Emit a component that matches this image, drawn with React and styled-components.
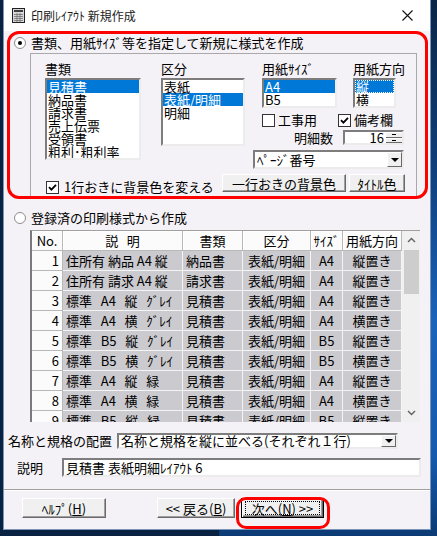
import styled, { createGlobalStyle } from 'styled-components';

const FONT = `"Noto Sans CJK JP", "Noto Sans", sans-serif`;

const GlobalStyle = createGlobalStyle`
  * { box-sizing: border-box; }
  html, body { margin: 0; padding: 0; background: #0b2646; }
  body { font-family: ${FONT}; font-size: 13px; color: #000; }
  #root { width: 437px; height: 536px; overflow: hidden; }
`;

const rows = [
  ['1', '住所有 納品 A4 縦', '納品書', '表紙/明細', 'A4', '縦置き'],
  ['2', '住所有 請求 A4 縦', '請求書', '表紙/明細', 'A4', '縦置き'],
  ['3', '標準   A4   縦   ｸﾞﾚｲ', '見積書', '表紙/明細', 'A4', '縦置き'],
  ['4', '標準   A4   横   ｸﾞﾚｲ', '見積書', '表紙/明細', 'A4', '横置き'],
  ['5', '標準   B5   縦   ｸﾞﾚｲ', '見積書', '表紙/明細', 'B5', '縦置き'],
  ['6', '標準   B5   横   ｸﾞﾚｲ', '見積書', '表紙/明細', 'B5', '横置き'],
  ['7', '標準   A4   縦   緑', '見積書', '表紙/明細', 'A4', '縦置き'],
  ['8', '標準   A4   横   緑', '見積書', '表紙/明細', 'A4', '横置き'],
  ['9', '標準   B5   縦   緑', '見積書', '表紙/明細', 'B5', '縦置き'],
];

const headers = ['No.', '説   明', '書類', '区分', 'ｻｲｽﾞ', '用紙方向'];
const cellAlign = ['right', 'left', 'left', 'center', 'center', 'center'];

const Desktop = styled.div`
  width: 437px;
  height: 536px;
  padding-left: 3px;
  background:
    linear-gradient(90deg, #0a2241 0 50%, transparent 50%),
    linear-gradient(180deg, #0b2646 0%, #0f3d78 30%, #1a63bb 60%, #155aae 85%, #0c3a74 100%);
`;

const Window = styled.div`
  width: 428px;
  height: 530px;
  border: 1px solid #7a95b8;
  border-top: none;
  background: #f4f2f6;
  display: flex;
  flex-direction: column;
`;

const TitleBar = styled.div`
  height: 31px;
  flex: none;
  background: #fff;
  display: flex;
  align-items: center;
  padding-left: 8px;
`;

const TitleText = styled.span`
  margin-left: 6px;
  font-size: 12px;
  line-height: 16px;
  color: #1a1a1a;
`;

const CloseButton = styled.div`
  margin-left: auto;
  width: 46px;
  height: 31px;
  display: flex;
  align-items: center;
  justify-content: center;
`;

const Client = styled.div`
  flex: 1;
  position: relative;
  display: flex;
  flex-direction: column;
`;

const RadioRow = styled.div`
  display: flex;
  align-items: center;
  gap: 5px;
  height: 16px;
  margin-top: ${p => p.$top}px;
  padding-left: 10px;
  line-height: 16px;
`;

const Radio = styled.span`
  width: 12px;
  height: 12px;
  border-radius: 50%;
  border: 1px solid #8e8e8e;
  background: #fff;
  display: flex;
  align-items: center;
  justify-content: center;
  &::after {
    content: '';
    width: 4px;
    height: 4px;
    border-radius: 50%;
    background: ${p => (p.$checked ? '#000' : 'transparent')};
  }
`;

const GroupBox = styled.div`
  margin: 2px 0 0 26px;
  width: 387px;
  height: 144px;
  border: 1px solid #a9a9a9;
  padding: 6px 11px 0 14px;
  display: flex;
  flex-direction: column;
`;

const TopArea = styled.div`
  display: flex;
  align-items: flex-start;
`;

const Column = styled.div`
  width: ${p => p.$w}px;
  margin-left: ${p => p.$ml || 0}px;
  display: flex;
  flex-direction: column;
`;

const FieldLabel = styled.div`
  line-height: 18px;
  height: 18px;
  white-space: nowrap;
`;

const ListBox = styled.div`
  height: ${p => p.$h}px;
  background: #fff;
  border: 2px solid;
  border-color: #7d7d7d #ececec #ececec #7d7d7d;
  overflow: hidden;
`;

const ListItem = styled.div`
  height: 13px;
  line-height: 13px;
  padding-left: 1px;
  white-space: nowrap;
  background: ${p => (p.$selected ? '#0078d7' : 'transparent')};
  color: ${p => (p.$selected ? '#fff' : '#000')};
  outline: ${p => (p.$focus ? '1px dotted #fff' : 'none')};
  outline-offset: -1px;
`;

const RightArea = styled.div`
  margin-left: 8px;
  width: 152px;
  display: flex;
  flex-direction: column;
`;

const SmallListsRow = styled.div`
  display: flex;
  gap: 16px;
  padding-left: 9px;
`;

const CheckRow = styled.div`
  display: flex;
  align-items: center;
  height: 14px;
  margin-top: 5px;
  padding-left: 9px;
  gap: 21px;
`;

const CheckItem = styled.label`
  display: flex;
  align-items: center;
  gap: ${p => p.$gap || 3}px;
  line-height: 14px;
  white-space: nowrap;
  margin-top: ${p => p.$top || 0}px;
  margin-left: ${p => p.$left || 0}px;
`;

const CheckBox = styled.span`
  width: 13px;
  height: 13px;
  border: 1px solid #333;
  background: #fff;
  display: flex;
  align-items: center;
  justify-content: center;
  flex: none;
`;

const SpinRow = styled.div`
  display: flex;
  align-items: center;
  justify-content: flex-end;
  gap: 10px;
  height: 15px;
  margin-top: 3px;
  padding-right: 1px;
  line-height: 15px;
`;

const Field = styled.div`
  background: #fff;
  border: 2px solid;
  border-color: #7d7d7d #ececec #ececec #7d7d7d;
  display: flex;
  align-items: center;
  width: ${p => p.$w}px;
  height: ${p => p.$h}px;
  margin-top: ${p => p.$top || 0}px;
  padding-left: ${p => (p.$pl === undefined ? 2 : p.$pl)}px;
  white-space: nowrap;
  line-height: ${p => Math.min(14, p.$h - 4)}px;
`;

const SpinValue = styled.span`
  flex: 1;
  text-align: right;
  padding-right: 2px;
`;

const SpinButtons = styled.div`
  width: 16px;
  height: 100%;
  display: flex;
  flex-direction: column;
`;

const SpinHalf = styled.div`
  flex: 1;
  background: #f0f0f0;
  border-top: 1px solid #fff;
  border-bottom: 1px solid #696969;
  display: flex;
  align-items: center;
  justify-content: center;
  &::after {
    content: '';
    width: 4px;
    height: 1px;
    background: #000;
  }
`;

const ComboArrow = styled.div`
  margin-left: auto;
  width: 15px;
  height: 100%;
  flex: none;
  background: #f0f0f0;
  border: 1px solid;
  border-color: #fff #696969 #696969 #fff;
  display: flex;
  align-items: center;
  justify-content: center;
  &::after {
    content: '';
    border-left: 4px solid transparent;
    border-right: 4px solid transparent;
    border-top: 4px solid #000;
  }
`;

const ComboText = styled.span`
  flex: 1;
`;

const BottomRow = styled.div`
  display: flex;
  align-items: flex-start;
  margin-top: 5px;
  height: 18px;
`;

const ButtonGroup = styled.div`
  margin-left: auto;
  display: flex;
  gap: 3px;
`;

const PushButton = styled.button`
  font-family: ${FONT};
  font-size: 13px;
  color: #000;
  width: ${p => p.$w}px;
  height: ${p => p.$h}px;
  margin-left: ${p => p.$ml || 0}px;
  padding: 0;
  background: #f0f0f0;
  border: 1px solid;
  border-color: ${p => (p.$default ? '#000' : '#fff #696969 #696969 #fff')};
  box-shadow: ${p =>
    p.$default
      ? 'inset 1px 1px 0 #fff, inset -1px -1px 0 #696969, inset -2px -2px 0 #a0a0a0'
      : 'inset -1px -1px 0 #a0a0a0'};
  display: flex;
  align-items: center;
  justify-content: center;
  line-height: 15px;
  white-space: nowrap;
`;

const FocusText = styled.span`
  width: calc(100% - 8px);
  height: calc(100% - 6px);
  outline: 1px dotted #000;
  display: flex;
  align-items: center;
  justify-content: center;
`;

const GridFrame = styled.div`
  margin: 4px 0 0 26px;
  width: 390px;
  height: 192px;
  display: flex;
  border-left: 2px solid #7a7a7a;
  border-top: 1px solid #a0a0a0;
  background: #fff;
`;

const Grid = styled.div`
  width: 370px;
  height: 100%;
  overflow: hidden;
  display: grid;
  grid-template-columns: 31px 120px 60px 68px 32px 59px;
  grid-auto-rows: 20px;
  align-content: start;
`;

const HeaderCell = styled.div`
  background: #fbfbfb;
  border-right: 1px solid #b8b8b8;
  border-bottom: 1px solid #b8b8b8;
  box-shadow: inset 1px 1px 0 #fff;
  display: flex;
  align-items: center;
  justify-content: center;
  white-space: pre;
  line-height: 19px;
`;

const DataCell = styled.div`
  background: ${p => (p.$num ? '#fbfbfb' : '#cbcacf')};
  border-right: 1px solid ${p => (p.$num ? '#b8b8b8' : '#f4f4f4')};
  border-bottom: 1px solid ${p => (p.$num ? '#b8b8b8' : '#f4f4f4')};
  display: flex;
  align-items: center;
  justify-content: ${p =>
    p.$align === 'right' ? 'flex-end' : p.$align === 'left' ? 'flex-start' : 'center'};
  padding: ${p => (p.$align === 'right' ? '0 3px 0 0' : p.$align === 'left' ? '0 0 0 3px' : '0')};
  white-space: pre;
  line-height: 19px;
  overflow: hidden;
`;

const ScrollBar = styled.div`
  width: 18px;
  height: 100%;
  background: #f0f0f0;
  display: flex;
  flex-direction: column;
  align-items: center;
`;

const ScrollArrow = styled.div`
  width: 18px;
  height: 18px;
  flex: none;
  display: flex;
  align-items: center;
  justify-content: center;
  margin-top: ${p => (p.$bottom ? 'auto' : '0')};
`;

const ScrollThumb = styled.div`
  width: 15px;
  height: 44px;
  margin-top: 1px;
  background: #cdcdcd;
`;

const FormRow = styled.div`
  display: flex;
  align-items: center;
  margin-top: ${p => p.$top}px;
  padding-left: ${p => p.$pl}px;
  gap: ${p => p.$gap}px;
  line-height: 16px;
  white-space: nowrap;
`;

const Separator = styled.div`
  margin-top: 12px;
  height: 2px;
  border-top: 1px solid #a0a0a0;
  border-bottom: 1px solid #fff;
`;

const ButtonBar = styled.div`
  display: flex;
  margin-top: 7px;
  padding-left: 18px;
`;

const Annotation = styled.div`
  position: absolute;
  left: ${p => p.$x}px;
  top: ${p => p.$y}px;
  width: ${p => p.$w}px;
  height: ${p => p.$h}px;
  border: 3px solid #ff0000;
  border-radius: ${p => p.$r}px;
  pointer-events: none;
`;

function Check({ checked }) {
  return (
    <CheckBox>
      {checked && (
        <svg width="9" height="9" viewBox="0 0 9 9">
          <path d="M1 4.2 L3.4 6.6 L8 1.8" fill="none" stroke="#000" strokeWidth="1.8" />
        </svg>
      )}
    </CheckBox>
  );
}

function List({ items, selected, focus, h }) {
  return (
    <ListBox $h={h}>
      {items.map((it, i) => (
        <ListItem key={it} $selected={i === selected} $focus={focus && i === selected}>
          {it}
        </ListItem>
      ))}
    </ListBox>
  );
}

function Chevron({ down }) {
  return (
    <svg width="9" height="6" viewBox="0 0 9 6">
      <path
        d={down ? 'M1 1 L4.5 4.5 L8 1' : 'M1 5 L4.5 1.5 L8 5'}
        fill="none"
        stroke="#606060"
        strokeWidth="1.4"
      />
    </svg>
  );
}

export default function App() {
  return (
    <>
      <GlobalStyle />
      <Desktop>
        <Window>
          <TitleBar>
            <svg width="13" height="15" viewBox="0 0 13 15">
              <rect x="0.5" y="0.5" width="12" height="14" fill="#d8d8d8" stroke="#202020" />
              <rect x="2" y="2" width="9" height="2" fill="#404040" />
              <path d="M2 6.5h9M2 8.5h9M2 10.5h9M2 12.5h9M5 5v9M8 5v9" stroke="#707070" strokeWidth="0.8" />
            </svg>
            <TitleText>印刷ﾚｲｱｳﾄ 新規作成</TitleText>
            <CloseButton>
              <svg width="11" height="11" viewBox="0 0 11 11">
                <path d="M0.5 0.5 L10.5 10.5 M10.5 0.5 L0.5 10.5" stroke="#111" strokeWidth="1.1" />
              </svg>
            </CloseButton>
          </TitleBar>

          <Client>
            <RadioRow $top={4}>
              <Radio $checked />
              <span>書類、用紙ｻｲｽﾞ等を指定して新規に様式を作成</span>
            </RadioRow>

            <GroupBox>
              <TopArea>
                <Column $w={96}>
                  <FieldLabel>書類</FieldLabel>
                  <List
                    h={82}
                    selected={0}
                    items={['見積書', '納品書', '請求書', '売上伝票', '受領書', '粗利･粗利率']}
                  />
                </Column>
                <Column $w={84} $ml={20}>
                  <FieldLabel>区分</FieldLabel>
                  <List h={68} selected={1} items={['表紙', '表紙/明細', '明細']} />
                </Column>
                <RightArea>
                  <SmallListsRow>
                    <Column $w={75}>
                      <FieldLabel>用紙ｻｲｽﾞ</FieldLabel>
                      <List h={30} selected={0} items={['A4', 'B5']} />
                    </Column>
                    <Column $w={43}>
                      <FieldLabel>用紙方向</FieldLabel>
                      <List h={30} selected={0} focus items={['縦', '横']} />
                    </Column>
                  </SmallListsRow>
                  <CheckRow>
                    <CheckItem>
                      <Check />
                      工事用
                    </CheckItem>
                    <CheckItem>
                      <Check checked />
                      備考欄
                    </CheckItem>
                  </CheckRow>
                  <SpinRow>
                    <span>明細数</span>
                    <Field $w={61} $h={15} $pl={0}>
                      <SpinValue>16</SpinValue>
                      <SpinButtons>
                        <SpinHalf />
                        <SpinHalf />
                      </SpinButtons>
                    </Field>
                  </SpinRow>
                  <Field $w={151} $h={19} $top={5}>
                    <ComboText>ﾍﾟｰｼﾞ番号</ComboText>
                    <ComboArrow />
                  </Field>
                </RightArea>
              </TopArea>
              <BottomRow>
                <CheckItem $top={6} $left={1} $gap={5}>
                  <Check checked />
                  1行おきに背景色を変える
                </CheckItem>
                <ButtonGroup>
                  <PushButton $w={124} $h={18}>一行おきの背景色</PushButton>
                  <PushButton $w={56} $h={18}>ﾀｲﾄﾙ色</PushButton>
                </ButtonGroup>
              </BottomRow>
            </GroupBox>

            <RadioRow $top={13}>
              <Radio />
              <span>登録済の印刷様式から作成</span>
            </RadioRow>

            <GridFrame>
              <Grid>
                {headers.map(h => (
                  <HeaderCell key={h}>{h}</HeaderCell>
                ))}
                {rows.map(r =>
                  r.map((c, i) => (
                    <DataCell key={r[0] + '-' + i} $num={i === 0} $align={cellAlign[i]}>
                      {c}
                    </DataCell>
                  ))
                )}
              </Grid>
              <ScrollBar>
                <ScrollArrow>
                  <Chevron />
                </ScrollArrow>
                <ScrollThumb />
                <ScrollArrow $bottom>
                  <Chevron down />
                </ScrollArrow>
              </ScrollBar>
            </GridFrame>

            <FormRow $top={11} $pl={4} $gap={5}>
              <span>名称と規格の配置</span>
              <Field $w={281} $h={16}>
                <ComboText>名称と規格を縦に並べる(それぞれ１行)</ComboText>
                <ComboArrow />
              </Field>
            </FormRow>

            <FormRow $top={9} $pl={13} $gap={19}>
              <span>説明</span>
              <Field $w={359} $h={19}>見積書 表紙明細ﾚｲｱｳﾄ 6</Field>
            </FormRow>

            <Separator />

            <ButtonBar>
              <PushButton $w={84} $h={20}>
                ﾍﾙﾌﾟ(<u>H</u>)
              </PushButton>
              <PushButton $w={78} $h={20} $ml={51}>
                &lt;&lt; 戻る(<u>B</u>)
              </PushButton>
              <PushButton $w={83} $h={20} $ml={6} $default>
                <FocusText>
                  次へ(<u>N</u>) &gt;&gt;
                </FocusText>
              </PushButton>
            </ButtonBar>

            <Annotation $x={3} $y={0} $w={421} $h={168} $r={12} />
            <Annotation $x={232} $y={466} $w={94} $h={32} $r={10} />
          </Client>
        </Window>
      </Desktop>
    </>
  );
}
